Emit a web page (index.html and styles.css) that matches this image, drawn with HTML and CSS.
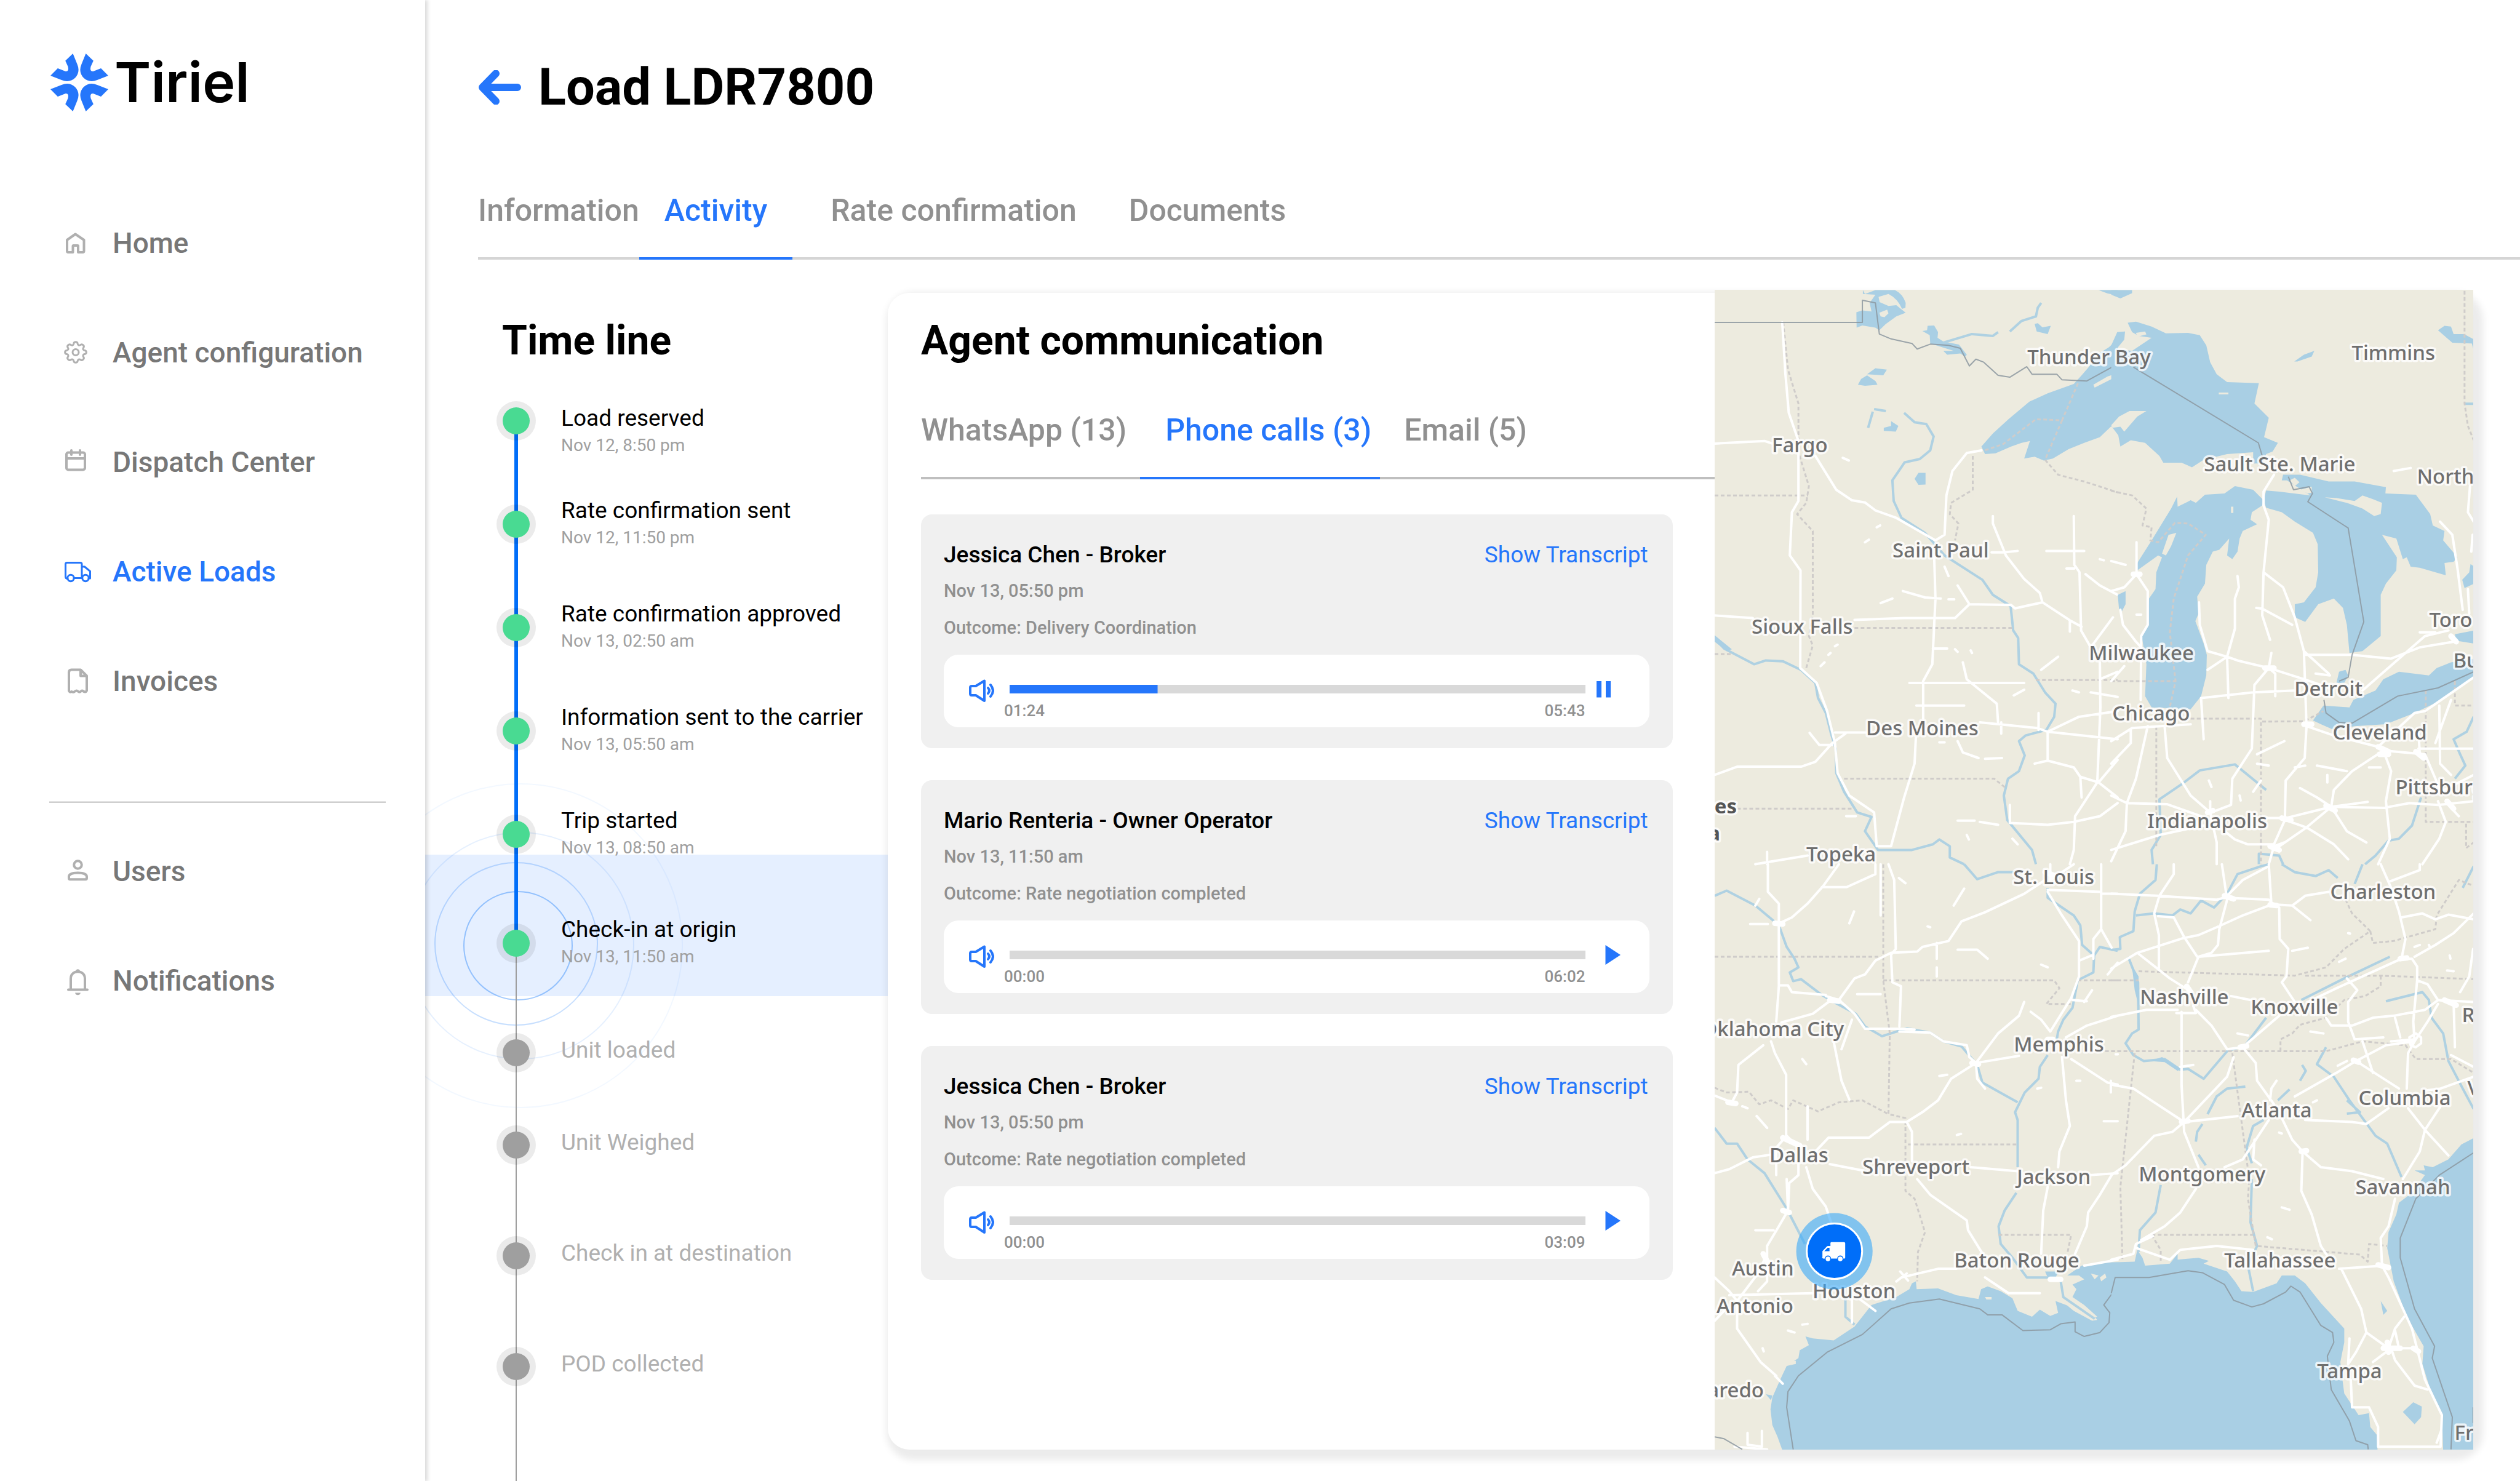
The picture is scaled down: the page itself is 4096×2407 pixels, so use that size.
FILE: index.html
```html
<!DOCTYPE html>
<html lang="en">
<head>
<meta charset="utf-8">
<title>Tiriel - Load LDR7800</title>
<link rel="stylesheet" href="styles.css">
</head>
<body>
<div class="app">
  <aside class="sidebar">
    <a class="brand" href="#">
      <svg class="brand-mark" viewBox="0 0 94 94" aria-hidden="true">
        <defs><path id="petal" d="M36.5 0L24.2 11.7L28.6 21.5Q30.4 29.6 24.6 29L11.9 23.9L0 36L18 43Q23 45 27 45A18.6 18.6 0 0 0 45.6 26.5Q45.6 22 43.4 17Z"/></defs>
        <use href="#petal"/>
        <use href="#petal" transform="matrix(-1 0 0 1 94 0)"/>
        <use href="#petal" transform="matrix(1 0 0 -1 0 94)"/>
        <use href="#petal" transform="matrix(-1 0 0 -1 94 94)"/>
      </svg>
      <span class="brand-name">Tiriel</span>
    </a>
    <nav class="nav" aria-label="Main">
      <a class="nav-link" href="#"><svg class="nav-icon" viewBox="0 0 44 44"><path d="M5 17L18.5 7.500L32.500 17V35Q32.500 37 30.500 37H23V27Q23 26 22 26H15.500Q14.500 26 14.500 27V37H7Q5 37 5 35Z"/></svg>Home</a>
      <a class="nav-link" href="#"><svg class="nav-icon nav-icon--thin" viewBox="0 0 44 44"><circle cx="19" cy="21.500" r="5"/><path d="M15.800 7.500C16.200 3.800 21.800 3.800 22.200 7.500C22.600 10.300 24.800 11 27 9.400C30 7.400 33.800 11.200 31.700 14C30.200 16.300 31.200 18.200 33.600 18.500C37.300 19 37.300 24 33.600 24.600C31 25 30.200 27 31.700 29.200C33.800 32 30 35.800 27 33.700C24.800 32.200 22.600 33 22.200 35.700C21.800 39.200 16.200 39.200 15.800 35.700C15.400 33 13.200 32.200 11 33.700C8 35.800 4.200 32 6.300 29.200C7.800 27 7 25 4.400 24.600C.7 24 .7 19 4.400 18.500C6.800 18.200 7.800 16.300 6.300 14C4.200 11.200 8 7.400 11 9.400C13.200 11 15.400 10.300 15.800 7.500Z"/></svg>Agent configuration</a>
      <a class="nav-link" href="#"><svg class="nav-icon" viewBox="0 0 44 44"><rect x="4" y="6.500" width="30" height="28" rx="3"/><path d="M4 16H34M12 3V10M26 3V10"/></svg>Dispatch Center</a>
      <a class="nav-link nav-link--active" href="#" aria-current="page"><svg class="nav-icon nav-icon--thin" viewBox="0 0 44 44"><path d="M6 33.500Q2.500 33.500 2.500 30V10Q2.500 7.500 5 7.500H26.500Q29 7.500 29 10V32M16 32.500H29M29 14H33.500L42.500 21.500V33H40"/><circle cx="11" cy="32.500" r="5.200"/><circle cx="35" cy="32.500" r="5.200"/></svg>Active Loads</a>
      <a class="nav-link" href="#"><svg class="nav-icon" viewBox="0 0 44 44"><path d="M8 37.500V8Q8 3.500 12 3.500H27L37 13.500V37.500Q35 41 31.500 38.500Q30 36.500 27.500 38.500Q25.500 41 22.500 38.500Q20.500 36.500 18 38.500Q15 41 12.500 39Q9 41 8 37.500ZM27 4V13.500H36"/></svg>Invoices</a>
    </nav>
    <hr class="nav-rule">
    <nav class="nav" aria-label="Account">
      <a class="nav-link" href="#"><svg class="nav-icon" viewBox="0 0 44 44"><circle cx="22.500" cy="11.500" r="6.300"/><path d="M8 33V31C8 26 16 24.500 22.500 24.500S37 26 37 31V33Q37 35.300 35 35.300H10Q8 35.300 8 33Z"/></svg>Users</a>
      <a class="nav-link" href="#"><svg class="nav-icon" viewBox="0 0 44 44"><path d="M11 36V18.500C11 3.500 34 3.500 34 18.500V36M7 36.500H38"/><path class="solid" d="M19 6a3.600 3.600 0 0 1 7 0zM18 41.500h9a4.600 4.600 0 0 1-9 0z"/></svg>Notifications</a>
    </nav>
  </aside>

  <main class="main">
    <header class="page-head">
      <button class="back" type="button" aria-label="Back"><svg viewBox="0 0 70 56"><path d="M29 5.500L7 28L29 50.500M7 28H64"/></svg></button>
      <h1>Load LDR7800</h1>
    </header>
    <nav class="tabs page-tabs" aria-label="Load sections">
      <a class="tab" href="#">Information</a>
      <a class="tab tab--active" href="#" aria-current="page">Activity</a>
      <a class="tab" href="#">Rate confirmation</a>
      <a class="tab" href="#">Documents</a>
    </nav>

    <div class="content">
      <section class="timeline">
        <h2>Time line</h2>
        <ol class="steps">
          <li class="step step--first"><span class="dot"></span><div class="step-text"><p class="step-title">Load reserved</p><p class="step-date">Nov 12, 8:50 pm</p></div></li>
          <li class="step"><span class="dot"></span><div class="step-text"><p class="step-title">Rate confirmation sent</p><p class="step-date">Nov 12, 11:50 pm</p></div></li>
          <li class="step"><span class="dot"></span><div class="step-text"><p class="step-title">Rate confirmation approved</p><p class="step-date">Nov 13, 02:50 am</p></div></li>
          <li class="step"><span class="dot"></span><div class="step-text"><p class="step-title">Information sent to the carrier</p><p class="step-date">Nov 13, 05:50 am</p></div></li>
          <li class="step"><span class="dot"></span><div class="step-text"><p class="step-title">Trip started</p><p class="step-date">Nov 13, 08:50 am</p></div></li>
          <li class="step step--current">
            <svg class="ripples" viewBox="0 0 560 560" aria-hidden="true"><circle cx="283" cy="284" r="88" opacity=".36"/><circle cx="280" cy="281" r="132" opacity=".22"/><circle cx="287" cy="284" r="184" opacity=".1"/><circle cx="287" cy="284" r="263" opacity=".05"/></svg>
            <span class="dot"></span><div class="step-text"><p class="step-title">Check-in at origin</p><p class="step-date">Nov 13, 11:50 am</p></div></li>
          <li class="step step--pending step--next"><span class="dot"></span><div class="step-text"><p class="step-title">Unit loaded</p></div></li>
          <li class="step step--pending step--near"><span class="dot"></span><div class="step-text"><p class="step-title">Unit Weighed</p></div></li>
          <li class="step step--pending"><span class="dot"></span><div class="step-text"><p class="step-title">Check in at destination</p></div></li>
          <li class="step step--pending"><span class="dot"></span><div class="step-text"><p class="step-title">POD collected</p></div></li>
        </ol>
      </section>

      <section class="panel">
        <div class="comms">
          <h2>Agent communication</h2>
          <nav class="tabs comms-tabs" aria-label="Channels">
            <a class="tab" href="#">WhatsApp (13)</a>
            <a class="tab tab--active" href="#" aria-current="page">Phone calls (3)</a>
            <a class="tab" href="#">Email (5)</a>
          </nav>
          <div class="calls">
            <article class="call">
              <header class="call-head"><h3>Jessica Chen - Broker</h3><a href="#">Show Transcript</a></header>
              <p class="call-meta">Nov 13, 05:50 pm</p>
              <p class="call-meta">Outcome: Delivery Coordination</p>
              <div class="player">
                <button class="icon-btn" type="button" aria-label="Volume"><svg class="speaker" viewBox="0 0 42 38"><path d="M12 11L26 2.500V35L12 26H5.500Q3 26 3 23.500V13.500Q3 11 5.500 11ZM32 14Q36 18.500 32 23M36 9Q44 18.500 36 28"/></svg></button>
                <div class="track"><input type="range" aria-label="Position" min="0" max="343" value="84" style="--played: 25.7%"><div class="times"><span>01:24</span><span>05:43</span></div></div>
                <button class="icon-btn" type="button" aria-label="Pause"><svg class="toggle" viewBox="0 0 44 32"><path d="M1 3h8v26.500h-8zM16 3h8v26.500h-8z"/></svg></button>
              </div>
            </article>
            <article class="call">
              <header class="call-head"><h3>Mario Renteria - Owner Operator</h3><a href="#">Show Transcript</a></header>
              <p class="call-meta">Nov 13, 11:50 am</p>
              <p class="call-meta">Outcome: Rate negotiation completed</p>
              <div class="player">
                <button class="icon-btn" type="button" aria-label="Volume"><svg class="speaker" viewBox="0 0 42 38"><path d="M12 11L26 2.500V35L12 26H5.500Q3 26 3 23.500V13.500Q3 11 5.500 11ZM32 14Q36 18.500 32 23M36 9Q44 18.500 36 28"/></svg></button>
                <div class="track"><input type="range" aria-label="Position" min="0" max="362" value="0" style="--played: 0%"><div class="times"><span>00:00</span><span>06:02</span></div></div>
                <button class="icon-btn" type="button" aria-label="Play"><svg class="toggle" viewBox="0 0 44 32"><path d="M15.500 0L40 16L15.500 32Z"/></svg></button>
              </div>
            </article>
            <article class="call">
              <header class="call-head"><h3>Jessica Chen - Broker</h3><a href="#">Show Transcript</a></header>
              <p class="call-meta">Nov 13, 05:50 pm</p>
              <p class="call-meta">Outcome: Rate negotiation completed</p>
              <div class="player">
                <button class="icon-btn" type="button" aria-label="Volume"><svg class="speaker" viewBox="0 0 42 38"><path d="M12 11L26 2.500V35L12 26H5.500Q3 26 3 23.500V13.500Q3 11 5.500 11ZM32 14Q36 18.500 32 23M36 9Q44 18.500 36 28"/></svg></button>
                <div class="track"><input type="range" aria-label="Position" min="0" max="189" value="0" style="--played: 0%"><div class="times"><span>00:00</span><span>03:09</span></div></div>
                <button class="icon-btn" type="button" aria-label="Play"><svg class="toggle" viewBox="0 0 44 32"><path d="M15.500 0L40 16L15.500 32Z"/></svg></button>
              </div>
            </article>
          </div>
        </div>

        <svg class="map" viewBox="0 0 1233 1884" preserveAspectRatio="xMidYMid slice" role="img" aria-label="Truck location map">
          <!-- north-west -->
          <g transform="matrix(.42406 0 0 .60959 -10.2 -22.6)">
            <path class="water" d="M592 38L600 48L640 38H715Q745 48 756 72L755 85L742 88Q725 60 690 48L652 56L656 70L690 80L720 78L756 98L720 108L680 128L655 145L640 138L590 132L568 138L567 97L590 92L625 95L618 72L640 50L592 48ZM820 147L838 145L840 133L865 132L880 150L878 165L900 175L960 183L990 210L985 215L965 207L915 210L900 200L940 200L850 180L848 158ZM1250 128L1262 126L1280 137L1312 133L1300 155L1258 148ZM1495 38L1530 47L1568 52V38ZM573 290L585 275L608 265L640 280L648 290L600 293ZM608 262L640 246L684 250L670 265ZM672 405L700 400V387L728 400L718 415L672 413ZM790 541L805 525L832 525V556L805 557ZM1046 455L1090 420L1150 382L1230 335L1300 313L1400 288L1430 265L1455 245L1500 205L1535 190L1550 180L1570 150V405L1545 400L1500 430L1440 445L1380 462L1320 487L1285 492L1250 482L1210 487L1232 440L1200 445L1160 455L1100 473L1060 475Z"/>
            <path class="land" d="M1475 290L1530 268L1555 262L1545 275L1480 298ZM655 98L685 90L690 100L675 110L660 108Z"/>
            <path class="river" d="M900 178L1010 155L1090 160L1110 150M1155 148L1200 120L1255 108L1262 85L1275 72M750 365L790 390L835 395L863 428L850 465L810 488L752 497L705 545L710 600L740 645L830 685L905 745L960 770L1050 810L1090 850L1158 880L1168 945L1187 965L1190 1035L1245 1060L1290 1110L1330 1140L1325 1175L1295 1210L1215 1225L1190 1240L1212 1278L1190 1320L1148 1340L1132 1385L1145 1450L1240 1530L1255 1568M612 405L630 362M635 355L680 360M24 965L60 993L175 1035L220 1025L285 1027L355 1050L410 1085L420 1125L450 1165L470 1220L488 1260L490 1325L520 1375L570 1430L625 1442L600 1480L650 1530L780 1530L860 1515L885 1502L925 1520V1550L980 1568"/>
            <path class="water" d="M24 958L90 995L70 1000L24 975Z"/>
            <path class="state" d="M287 124L305 250L345 340V470L385 560L375 605L340 635L400 680V905L385 960L400 985L375 1045M24 585H382M560 938H1168M24 1008H95M110 1420H560M520 1340H1095L1140 1365M1255 1077H1568M1013 480V570L930 605L925 635L958 660L945 705M1060 465L1130 448L1255 382L1355 385L1420 280M1355 385L1290 490L1340 530L1440 548L1568 577"/>
            <path class="road" d="M283 124L295 260L308 365L345 440V600L320 630L312 745L353 785L352 1045L415 1085L455 1160L485 1245L495 1325L540 1385L635 1430L645 1520H700L750 1390L790 1300L795 1230M24 447L215 440L245 447M410 480L490 570L550 598L600 604L640 625L720 645L870 705L905 690L912 585L935 520L990 472L1046 465M865 745L870 860L858 1035L823 1080V1180M24 905L170 912M560 917L750 912H945L1000 875L1160 877L1175 886L1280 870L1385 918L1430 935M1090 640V660L1140 745L1210 808L1270 845L1280 870M1085 737H1130L1185 733M1400 640L1402 770L1422 790L1428 945L1465 990M1385 918V948M1372 780H1402M1295 733H1440M1445 795L1500 825L1568 850M1465 990L1550 910M770 1085H1210M797 1145H980M975 1030L990 1075L1105 1140L1110 1190M1122 1190V1220M485 1217H605M1040 1190L1260 1205L1300 1215L1420 1175L1568 1160M1265 1165V1210M1300 1215L1568 1235M1250 1300L1300 1292V1215M1300 1292L1400 1310L1425 1335L1495 1350L1568 1290M1500 1030L1502 1150L1490 1350L1405 1440L1400 1530L1385 1568M1155 1410V1458L1300 1463L1400 1455L1500 1440L1568 1405M1425 1335L1430 1390M1495 1350L1568 1390M1465 1110L1568 1122M1500 1075L1568 1055M24 1330L110 1308H355L410 1295L475 1245L525 1220M388 1218L425 1250H475M225 1535V1568M180 1568L290 1555L380 1545M745 840L830 857L890 860M920 862H942M660 872L705 860M860 993H915M955 825L1000 875M905 775L920 800M1275 1050L1340 1015M1170 1118L1210 1103M600 710L615 703M645 670L658 665M515 485L538 492M430 1040L445 1030M485 987L495 983M460 1010L468 1005M945 995L955 1002M1005 998L1010 1005M955 1240L975 1270L1035 1285M1060 1287L1125 1285M955 1452H1020M1040 1455L1110 1463M528 1440H565M885 1243H905M1165 1500L1185 1515M990 1490L998 1502M1395 1105L1420 1110M1500 755L1515 758"/>
            <path class="country" d="M24 124H590V65L640 72L655 155L700 168L780 180L800 195L850 182L920 185L965 193L1000 240L1025 222L1055 230L1110 265L1155 270L1220 242L1240 262H1335L1355 277L1450 280L1568 235"/>
          </g>
          <!-- north-east -->
          <g transform="matrix(.423 0 0 .60959 646.5 -22.6)">
            <path class="water" d="M-5 38H75V46L30 60L-5 50ZM-5 185L18 150L48 148L45 170L15 195L75 200L150 165L100 160L75 150L58 125L90 122L150 135L205 153L290 152L335 158L360 185L375 230L400 262L440 283L562 286L545 340L600 378L582 430L635 445L615 468L590 475L575 500H540V470L440 475L350 490L305 510L265 498H195L180 480L125 445L70 438L30 455L22 425L-5 400ZM95 785V765L150 705L225 620L248 588L250 615L300 598L320 605L355 583L430 580L470 560L540 570L580 598L575 612L535 630L530 650L555 662L500 680L488 700L480 735L460 755L440 745L448 700L410 730L385 735L360 770L355 820L325 855L330 900L318 920L350 980L362 1010L360 1065L340 1120L300 1155L150 1150L125 1120L130 1035L112 960L130 935L140 860L165 835L168 790L190 750L175 745ZM580 598L590 572L640 575L760 585L670 545H650L655 530H720L830 548H930L1050 563L1048 580L1165 583L1220 635L1230 665L1275 680L1270 705L1325 750L1310 762L1275 765L1280 798L1180 778L1145 775L1130 750L1115 755L1090 700L1035 690L1092 750L1090 785L1050 820L1030 850V960L960 1000L910 1005L900 930L885 885L850 860L790 875L740 922L700 910V875L735 870L780 830L790 790L788 715L770 685L700 655L650 630L590 618ZM860 1085L870 1055L895 1050L905 1065L890 1085ZM770 1185L810 1145L910 1150L925 1130L1010 1105L1040 1075L1100 1055L1215 1065L1245 1045L1300 1030L1390 1020V1068L1250 1135L1160 1165L1050 1195L930 1200L850 1210L800 1195ZM1315 955L1390 945V980L1320 972ZM1343 810L1370 790L1375 768L1390 775V820L1352 832ZM1250 145L1275 133L1300 135L1310 155H1350L1390 170V205L1380 180L1305 178ZM698 228L735 210L775 200L765 215L710 228ZM20 850L50 840V875L35 895L25 890Z"/>
            <path class="land" d="M-5 398L25 375L65 360L130 360L95 375L45 415L30 402L0 405ZM190 740L215 690L245 685L225 720L205 745ZM860 592L930 600L960 585L1000 595L1035 605L1030 635L1005 640L960 620L900 605L815 590ZM680 545L700 538L718 550L700 560ZM90 152L125 148L130 156L95 162ZM408 311H445V316H408ZM455 615H464V632H455ZM720 570L765 562V578L750 580Z"/>
            <path class="river" d="M155 1568L150 1530L185 1490L180 1395L265 1355L335 1318L470 1302L590 1370M1387 1175L1360 1215L1310 1235L1335 1275L1355 1305L1315 1340M1185 1390L1150 1465L1100 1500L1060 1505L1010 1545L970 1568M1352 341H1387M562 1568V1540L640 1545L655 1568"/>
            <path class="state" d="M1352 40V340L1365 400L1387 438M-5 573L75 585L130 620L115 665L150 670L145 705L175 710L240 658L290 660L358 690L290 745L235 860L220 950L242 1080L215 1165M-5 1080H242M168 1200V1520M300 1180H570V1568M575 1188L735 1187L810 1160M1203 1105V1455H1387M1315 1080V1145H1387M1358 1460V1525L1387 1510"/>
            <path class="road" d="M620 530L580 575V612L600 650L580 790L655 830L700 910L735 1000L745 1200L738 1285L665 1345L662 1450M580 790L575 905L605 970M552 885L575 887L690 930M480 800L485 830L470 860V940L440 1015L445 1125M332 870L335 930L365 1000L440 1015L480 1025L600 1045L735 1075L800 1090M365 1050L440 1015M340 1125L540 1110L700 1105M610 1005L600 1045L545 1090L535 1260L460 1340L455 1410L380 1430M600 1045L625 1060V1120M735 1010H920L1070 1020L1180 990L1310 975M960 1105L1100 1020L1200 960L1290 945M1180 950L1240 950M340 1125L350 1235M745 1200L850 1225M735 1000L830 1060M-5 760L50 770M-5 840L45 830L92 795L135 840V930L110 960L108 1130M92 710V795M30 890L40 930L90 975L110 990M92 903H110M-5 1080L45 1040M-5 1240L75 1205L300 1195M70 1210V1245L-5 1300M200 1200L210 1285L300 1385L375 1430M135 1200L90 1340L55 1405L50 1480L-5 1560M-5 1385L55 1405L210 1408L340 1440M-5 1530L180 1490L350 1465M375 1400V1430L400 1510V1568M430 1480L470 1502L520 1515H620L665 1445L840 1415M590 1445H665M720 1365L785 1390L840 1415L980 1402M840 1415L1040 1418L1140 1405L1250 1410L1387 1400M840 1415L850 1370L920 1320L1040 1265L1200 1275L1240 1340L1260 1375L1387 1330M1040 1265L1070 1320L1050 1400L1065 1500L1020 1568M850 1225L1020 1255L1160 1165L1200 1160L1387 1070M1175 1260H1387M1255 1145L1258 1300L1300 1330M1250 1400L1280 1455L1255 1500L1190 1568M1330 1440L1290 1410M840 1415L900 1480L975 1510M662 1450L745 1470L850 1515L905 1555M620 1530L745 1470L840 1415M1258 655L1305 690L1325 780L1345 890M1365 835L1370 900M1373 560L1365 630L1387 655M1383 690L1378 735M1080 520L1145 512M785 1305L900 1320M1175 1210L1180 1275M1240 1245L1300 1130M600 1568L620 1520L660 1510M555 1275L660 1240M700 1310L740 1305M555 1300L600 1305M370 1345L380 1362M488 1385L492 1398M825 1330V1350M985 1310H1030M780 1060L835 1065M540 1375L570 1345"/>
            <path class="road hub" d="M1020 1255L1060 1268M1025 1275H1060M1165 1268L1195 1285M820 1412L855 1425M605 1520L640 1530M735 1195H765M1285 1400L1310 1420M80 795H105M1300 960L1320 975M365 1430L385 1425M585 1045H620M650 1445L685 1450"/>
            <path class="country" d="M80 243L560 445L575 480M675 535L695 570L755 562L768 580L750 602L905 672L965 922L920 1010L905 1070L870 1080M812 1130L820 1165L870 1190L920 1192L1095 1120L1250 1098L1387 1055"/>
          </g>
          <!-- south-west -->
          <g transform="matrix(.42406 0 0 .63928 -10.2 933.3)">
            <path class="water" d="M780 1065L795 1060L798 1080L880 1078L950 1095L1035 1105L1045 1080L1070 1073L1120 1085L1165 1103L1185 1135L1240 1150L1270 1132L1310 1148L1340 1140L1330 1110L1390 1125L1470 1155L1490 1150L1440 1120L1395 1100L1410 1080L1395 1068L1440 1055L1420 1045H1375L1430 1020L1500 1012H1572V1492H285L265 1455L245 1425L238 1385L245 1355L275 1310L300 1275L345 1255L350 1235L385 1222L372 1200L400 1205L480 1210L560 1175L625 1120L720 1100L770 1080ZM1290 1035H1340L1330 1052L1300 1050ZM220 1347L245 1350L240 1362Z"/>
            <path class="land" d="M1500 1050L1520 1040L1525 1050L1505 1060ZM1345 1105L1480 1150L1490 1158L1470 1160L1400 1135ZM1465 1040L1495 1045L1480 1055ZM1060 1100L1085 1100V1106H1065ZM296 1262L335 1262L335 1270L300 1275Z"/>
            <path class="river" d="M24 80L70 67L180 105L270 155L300 210L330 240L345 262L312 275L325 297L355 292L430 330L480 350L565 380L600 412L665 437L760 417L850 428L900 450L970 463L1030 510L1050 555L1185 605M1300 60V85L1400 130L1425 155L1432 205L1478 232L1475 275L1415 295L1395 365L1360 395L1340 425L1335 445M1300 485L1270 515L1265 545L1212 580L1175 630L1185 650L1185 770M1180 835L1135 880L1112 920L1120 965L1165 1000L1220 1050H1320M1478 232L1500 210L1568 220M980 0L1030 38L1110 20H1200M24 670L70 710H110L150 750L215 785L300 875L370 965M525 1100V1150L560 1170M1350 1060L1360 1100L1480 1155"/>
            <path class="state" d="M24 235H665M670 0V295L695 430L690 635L755 645V830L790 850L830 935L803 985L800 1060M670 295H1325L1345 315L1295 355H1395M24 568L70 580L155 578L195 610L240 600L305 622L325 600L420 628L500 605L590 600L690 635M765 712H1185M1112 942H1390L1375 990M1415 295H1568M1520 475H1568"/>
            <path class="road" d="M228 0V70L270 100V310L260 400M272 150L320 135L380 100L440 55L500 0M435 58L530 58L640 25V0M270 308H305L320 325L450 332M160 152H228M180 105L195 88M450 335L500 345L560 290L600 280L640 245L700 225L800 222L820 210L920 195L970 145L1060 122L1210 75L1290 40M690 0L712 40L718 215L700 230L705 300L738 310L732 412M500 345L560 380L600 418H732L790 420M732 425L850 428L900 450L990 460L1000 490L1025 505L1030 545L1060 570M280 402L400 380L470 345M660 0V130M240 450L255 480L298 535V690M210 460L115 510L110 580L90 605L24 588M480 450L510 550L540 598M875 200V240M875 262V285M1025 505L1190 487M1025 505L1110 430L1190 385L1210 350M1025 505L930 545L880 600L820 630L760 655H695L615 695L460 695L410 730M760 655L780 680V755M800 800L850 840L990 905L995 930L1060 1000M1005 770L1185 780M465 762L590 778M24 785L80 775L170 745L240 738M300 690L260 720V790M300 690L345 720V790L310 810L305 880L270 920L225 970V1000M300 800L305 880M375 770L400 825L450 870L470 910M380 615V700M180 930H250M24 1050L80 1085L110 1110L190 1040L225 990M225 1020L225 1060L190 1085M80 1095L400 1090M24 1160L60 1135M110 1110V1180L200 1265L260 1300M740 1050L880 1028H950M735 1035L765 1058M720 1060L760 1040M550 1100V1165M580 1105L640 1135M1060 1050L1150 1090M1150 1090H1270M1355 490L1370 600L1385 665L1345 730L1340 770M1300 820L1283 880L1275 990M1460 790L1568 785M1545 790L1500 840L1455 885L1450 920L1405 990M1440 1020L1568 1005M1300 70L1350 125L1420 195V285L1390 340L1310 425M1300 65L1505 70V165L1475 190V240M1505 0V70M1505 75H1568M1505 165L1545 212M1310 0V40L1400 0M1390 495L1460 525L1530 555L1568 560M1542 550V580M1370 440L1450 410L1568 385M1235 375L1275 395L1310 425M1420 245L1475 230M1440 350L1470 320M1515 653H1568M1395 345L1450 348M1530 280L1568 250M955 217H1030L1070 240M570 330H660M510 470L550 395M540 150L558 120M940 105L980 62M730 35L755 48M185 640L225 670M360 495L375 508M885 538L915 535M1275 255L1300 262M840 158L850 160M1410 550L1425 550M1260 570L1275 568M305 1185L330 1190M360 1170L380 1168M208 1230L212 1238M150 1445V1475L205 1480V1440M100 1480L225 1487M130 615L150 620M255 1300L285 1320M952 688L968 685"/>
            <path class="road hub" d="M465 345L500 348M1010 505L1035 508M285 695L350 715M255 150L285 152M210 990L230 1015M285 880L310 885M1300 445H1320M1310 1055L1350 1055M75 605L105 608M1290 20L1330 30"/>
            <path class="country" d="M325 1487L300 1380L305 1340L345 1300L455 1240L590 1195L700 1130L770 1115L885 1105L1040 1130L1070 1145H1125L1205 1185L1310 1183L1350 1168L1405 1163V1188L1440 1200L1500 1190L1535 1165L1538 1140L1515 1120L1548 1090L1555 1052H1568M24 1455L60 1460L130 1487"/>
          </g>
          <!-- south-east -->
          <g transform="matrix(.423 0 0 .63928 646.5 933.3)">
            <path class="water" d="M-5 1012L85 1010L95 980L115 1000L125 1020L220 1015L250 990V1005L330 1000L370 1008L350 1015L440 1035L470 1060L495 1085L540 1087L630 1065L650 1045H700L740 1065L800 1115L890 1180V1215L875 1265L885 1320L890 1345L945 1400L985 1395L990 1430L1015 1450L1018 1492H-5ZM1390 695L1340 712L1290 750L1230 770L1195 765L1200 778H1160L1200 790L1150 835L1100 860L1090 890L1060 935L1055 975L1080 1060L1130 1150L1195 1225L1190 1270L1225 1345L1265 1395L1270 1492H1390ZM1115 1392L1155 1367L1188 1378L1185 1405L1160 1423ZM1030 1110L1055 1135L1040 1145Z"/>
            <path class="river" d="M170 0L165 40L105 75L85 120L80 170L28 185L30 215L-5 218M60 235L98 300L100 420L75 430L50 455L80 485L120 500L200 495L260 522L290 520L350 545L440 475L510 460L590 390M725 345L890 290L1065 235M90 130L160 125L230 130L260 115L300 125L340 92L390 110L440 75L480 25L570 5L600 0M650 0L700 20L780 30L830 15L865 35M930 50L960 0M1345 60L1387 5M365 635L400 590L440 570L510 565M320 705L325 680L345 660M330 738L358 765M185 815L165 885L105 930L100 985M580 650L540 665L515 720L535 760M535 800L530 910L555 970L520 1020L540 1085M820 465L785 508L850 540L910 600L1010 690L1055 710L1110 795M900 600L950 630L900 634M1050 348L1190 325L1215 345L1225 390L1270 430L1290 500L1345 570L1387 622M635 600L680 572M720 550L742 525L728 510"/>
            <path class="water" d="M55 235L100 285V360L85 320L75 260ZM145 500L190 490L262 520L250 525L200 503Z"/>
            <path class="state" d="M100 272L700 283L820 262L890 215L990 170L920 125L895 90M740 283H1030L1387 292M-5 295H100M-5 475H820L960 450L1125 460L1165 495H1300L1387 530M85 480L30 820L38 1005M460 480L525 800L520 850L550 970L950 992L980 1010L985 965L1055 970M150 942H540M150 942L185 980V1010M645 475V445L690 430L720 408L820 390L890 345L970 335L1030 310V285M990 170L1000 200L1080 195L1240 165L1245 130L1330 40L1387 55"/>
            <path class="road" d="M235 0V25L180 80L160 125L178 180V265M-5 75L170 80L400 90L430 85L600 90L620 102L690 105L740 80L830 70M420 0L440 90L410 165L405 205L380 225L330 235L290 300M175 132L235 135L275 185L325 235M-5 265L95 225L270 188L330 180L400 160L500 130L600 105M95 225L220 290L280 315M600 0L610 100L640 110L642 190L675 215L668 285L650 300L700 350M440 80L500 40L600 5M690 105L760 142M330 235L600 220M690 220L750 212M-5 388L130 370H250M320 370L380 410L440 470L500 465L550 505L555 550L620 610M500 465L640 385M750 350L860 315L1110 240H1150L1170 260V295L1155 400L1160 450L1135 480L1130 570M265 375V560L275 680L330 770M245 378H320L310 360M-5 560L80 570L160 605L275 655L480 640M-5 790L50 765L160 690L230 680L275 655L440 540L465 490M430 770L500 750L600 650M110 955L200 920L260 885L320 825M-5 1005L80 990L90 965L155 945M90 975L220 1005L260 980L400 970L540 980M650 645L690 700L730 730L800 770L920 780L1040 800M730 730L725 830L765 890L800 970L830 1000M740 650L920 655L975 660L1060 620M700 590L860 530L935 500L1050 460L1160 450M935 500L1100 570M960 450L1000 530M865 512L900 500M1135 620L1200 675L1290 740M1260 615L1200 675L1180 730L1115 800M1085 850L1060 920L1030 950L1035 1020L1060 1050L1150 1180L1200 1310L1265 1400L1260 1480H1020V1430L985 1380H920L915 1310M870 1028L1040 1020M880 1030L955 1130L975 1190L935 1240L905 1270L910 1205M975 1190L1060 1230H1160M1000 1265L1070 1230L1085 1260L1160 1325L1210 1335M1060 1230L1085 1180L1120 1150M1085 1185L1100 1230M900 290L940 320L905 350V400L930 445L1040 440M820 390L840 410H920L1000 390L1080 385L1200 370L1250 345L1387 350M1085 390L1105 440M1070 450L1160 445M1170 295L1210 305L1250 345L1310 350L1315 465M1160 450L1210 400L1250 355M1110 240L1125 190L1100 120L1070 60L1030 0M1060 45L1180 15V0M1110 135L1190 125L1240 140L1290 128L1387 140M1160 235L1240 205L1310 175L1387 125M455 335L530 345M1300 485L1387 515M1200 575L1260 570L1387 540M1335 325L1370 285L1385 215M605 600L610 570L630 550M480 430L520 435M760 425L810 430M650 872L680 878M595 948L612 953M260 515L310 510M545 700L540 750L570 765M870 248L895 240M1160 210L1180 205M1215 205L1220 212M1295 232L1298 240M1285 270L1310 272M905 175L912 176M640 682L650 684M770 605L785 600M12 483H20M1245 1470L1262 1440"/>
            <path class="road hub" d="M490 465L515 462M265 655L290 652M430 80L465 88M1275 345L1320 358M925 498L945 503M1020 1018L1060 1025M1040 1230H1105M1055 1215L1060 1240M725 730L745 728M605 103L630 105M285 310L300 325M1105 240L1130 238M1155 1230L1175 1238"/>
            <path class="road" d="M1140 440L1165 430L1185 440V455L1165 465L1145 460Z"/>
            <path class="country" d="M-5 1090L10 1050H140L290 1033L345 1038L430 1068L465 1108L535 1125L580 1117L665 1087L685 1072L720 1087L800 1172L845 1190L850 1215L825 1250L840 1335L910 1415L935 1465L980 1475L982 1487M1387 733L1255 790L1165 850L1105 950V1000L1160 1130L1237 1225L1228 1255L1305 1405L1300 1487M1385 1380V1420"/>
          </g>
          <g class="cities">
            <text x="93" y="264">Fargo</text>
            <text x="508" y="121">Thunder Bay</text>
            <text x="289" y="435">Saint Paul</text>
            <text x="60" y="559">Sioux Falls</text>
            <text x="608" y="602">Milwaukee</text>
            <text x="246" y="724">Des Moines</text>
            <text x="646" y="700">Chicago</text>
            <text class="region" x="36" y="851" text-anchor="end">es</text>
            <text class="region" x="9" y="895" text-anchor="end">a</text>
            <text x="149" y="929">Topeka</text>
            <text x="1035" y="114">Timmins</text>
            <text x="795" y="295">Sault Ste. Marie</text>
            <text x="1141" y="315">North</text>
            <text x="1161" y="548">Toro</text>
            <text x="1200" y="614">Bu</text>
            <text x="942" y="660">Detroit</text>
            <text x="1004" y="731">Cleveland</text>
            <text x="1106" y="820">Pittsburg</text>
            <text x="703" y="875">Indianapolis</text>
            <text x="485" y="966">St. Louis</text>
            <text x="210" y="1213" text-anchor="end">Oklahoma City</text>
            <text x="486" y="1238">Memphis</text>
            <text x="89" y="1417">Dallas</text>
            <text x="240" y="1436">Shreveport</text>
            <text x="491" y="1452">Jackson</text>
            <text x="28" y="1601">Austin</text>
            <text x="3" y="1662">Antonio</text>
            <text x="159" y="1638">Houston</text>
            <text x="389" y="1588">Baton Rouge</text>
            <text x="80" y="1799" text-anchor="end">aredo</text>
            <text x="1000" y="990">Charleston</text>
            <text x="691" y="1161">Nashville</text>
            <text x="871" y="1177">Knoxville</text>
            <text x="1214" y="1190">R</text>
            <text x="1223" y="1309">V</text>
            <text x="1046" y="1325">Columbia</text>
            <text x="856" y="1345">Atlanta</text>
            <text x="689" y="1448">Montgomery</text>
            <text x="1041" y="1469">Savannah</text>
            <text x="828" y="1588">Tallahassee</text>
            <text x="979" y="1768">Tampa</text>
            <text x="1202" y="1868">Fr</text>
          </g>
          <g transform="translate(194.600 1562)">
            <circle class="pin-halo" r="62"/>
            <circle class="pin" r="45"/>
            <path class="pin-truck" d="M-6.500 -13Q-6.500 -14.800 -5 -14.800H15.500Q17.500 -14.800 17.500 -13V10.500Q17.500 12 16 12H14.500A5 5 0 0 0 4.500 12H-5.500A5 5 0 0 0 -15.500 12H-18.500L-20.500 10H-19.500V0L-12.500 -7.500Q-12 -8.500 -10 -8.500H-6.500ZM-16.500 0H-8V-5.500H-11Z" fill-rule="evenodd"/>
            <circle class="pin-wheel" cx="-10.500" cy="12.500" r="3.800"/><circle class="pin-wheel" cx="9.500" cy="12.500" r="3.800"/>
          </g>
        </svg>
      </section>
    </div>
  </main>
</div>
</body>
</html>
```

FILE: styles.css
```css
:root {
  --blue: #2576fb;
  --blue-strong: #006ef9;
  --muted: #909090;
  --soft: #a0a0a0;
}

* { box-sizing: border-box; }

body, h1, h2, h3, p, ol { margin: 0; padding: 0; }

body {
  background: #fff;
  color: #000;
  font-family: Roboto, "Liberation Sans", sans-serif;
}

a { color: inherit; text-decoration: none; }

button { padding: 0; border: 0; background: none; cursor: pointer; }

svg { display: block; }

.app {
  display: grid;
  grid-template-columns: 691px minmax(0, 1fr);
  min-height: 100vh;
}

/* Sidebar */
.sidebar {
  position: relative;
  z-index: 2;
  padding: 87px 64px 0 80px;
  background: #fff;
  box-shadow: 4px 0 6px rgba(0, 0, 0, .14);
}

.brand {
  display: flex;
  align-items: center;
  gap: 10px;
  height: 94px;
  padding-left: 2px;
}

.brand-mark { width: 94px; height: 94px; fill: var(--blue); }

.brand-name {
  font-family: Inter, sans-serif;
  font-weight: 600;
  font-size: 90px;
  line-height: 94px;
}

.nav {
  display: flex;
  flex-direction: column;
  gap: 124px;
  padding-left: 24px;
}

.brand + .nav { margin-top: 187px; }

.nav-link {
  display: flex;
  align-items: center;
  gap: 35px;
  color: #777;
  font-weight: 500;
  font-size: 46px;
  line-height: 54px;
}

.nav-icon {
  width: 44px;
  height: 44px;
  overflow: visible;
  fill: none;
  stroke: #b0b0b0;
  stroke-width: 4;
  stroke-linecap: round;
  stroke-linejoin: round;
}

.nav-icon--thin { stroke-width: 3; }
.nav-icon .solid { fill: #b0b0b0; stroke: none; }

.nav-link--active { color: var(--blue); }
.nav-link--active .nav-icon { stroke: var(--blue); }

.nav-rule {
  height: 1px;
  margin: 169px 0 85px;
  border: 0;
  background: #333;
}

/* Page head */
.main {
  display: flex;
  flex-direction: column;
  min-width: 0;
  padding-top: 93px;
}

.page-head {
  display: flex;
  align-items: center;
  gap: 28px;
  padding-left: 86px;
}

.back svg {
  width: 70px;
  height: 56px;
  fill: none;
  stroke: var(--blue);
  stroke-width: 12;
  stroke-linecap: round;
  stroke-linejoin: round;
}

h1 { font-weight: 700; font-size: 83px; line-height: 98px; }

h2 { font-weight: 700; font-size: 66px; line-height: 76px; }

.tabs {
  display: flex;
  border-bottom: 4px solid #d5d5d5;
}

.tab {
  margin-bottom: -4px;
  padding-bottom: 47px;
  border-bottom: 4px solid transparent;
  color: var(--muted);
  font-weight: 500;
  font-size: 50px;
  line-height: 58px;
  white-space: nowrap;
}

.tab--active { border-color: var(--blue); color: var(--blue); }

.page-tabs { margin: 122px 0 0 86px; }
.page-tabs .tab--active { margin-right: 62px; padding-inline: 41px; }
.page-tabs .tab:last-child { margin-left: 85px; }

/* Content */
.content {
  display: grid;
  grid-template-columns: 752px minmax(0, 1fr);
  flex: 1;
  padding-right: 76px;
}

.timeline {
  display: flex;
  flex-direction: column;
  padding-top: 94px;
}

.timeline h2 { padding-left: 125px; }

.steps {
  position: relative;
  isolation: isolate;
  flex: 1;
  margin-top: 60px;
  list-style: none;
}

.steps::before,
.steps::after {
  content: "";
  position: absolute;
  z-index: 1;
  left: 147px;
  top: 32px;
}

.steps::before { bottom: 0; width: 2px; background: #9e9e9e; }
.steps::after { left: 145px; width: 6px; height: 849px; background: var(--blue-strong); }

.step {
  position: relative;
  display: flex;
  align-items: center;
  gap: 41px;
  height: 64px;
  padding-left: 116px;
}

.step + .step { margin-top: 104px; }

.dot {
  position: relative;
  z-index: 2;
  flex: none;
  width: 64px;
  height: 64px;
  border: 10px solid rgba(0, 0, 0, .08);
  border-radius: 50%;
  background: #49da92;
  background-clip: padding-box;
}

.step-text { position: relative; z-index: 2; }

.step-title { font-size: 37px; line-height: 44px; white-space: nowrap; }
.step-date { color: var(--soft); font-size: 28px; line-height: 44px; }

.step--first .step-text { padding-top: 36px; }

.step + .step--current {
  height: 230px;
  margin-top: 1px;
  padding-top: 112px;
  padding-bottom: 54px;
  background: #e5efff;
}

.ripples {
  position: absolute;
  left: -132px;
  top: -136px;
  width: 560px;
  height: 560px;
  fill: none;
  stroke: var(--blue-strong);
  stroke-width: 2;
}

.step--pending .dot { background-color: #9f9f9f; }
.step--pending .step-text { padding-bottom: 8px; color: #b0b0b0; }
.step + .step--pending { margin-top: 116px; }
.step + .step--next { margin-top: 60px; }
.step + .step--near { margin-top: 86px; }

/* Communication panel */
.panel {
  position: relative;
  z-index: 1;
  display: grid;
  grid-template-columns: minmax(0, 1343fr) minmax(0, 1233fr);
  margin: 54px 0 52px;
  border-radius: 35px;
  background: #fff;
  box-shadow: 7px 8px 12px 9px rgba(0, 0, 0, .08);
}

.comms { padding: 40px 0 0 54px; }

.comms-tabs { margin-top: 78px; border-color: #bfbfbf; }
.comms-tabs .tab--active { margin: 0 39px -4px 22px; padding-inline: 41px 14px; }

.calls {
  display: flex;
  flex-direction: column;
  gap: 52px;
  margin: 57px 68px 0 0;
}

.call {
  padding: 44px 38px 34px 37px;
  border-radius: 18px;
  background: #f0f0f0;
}

.call-head {
  display: flex;
  justify-content: space-between;
  margin-bottom: 6px;
  padding-right: 2px;
  font-size: 37px;
  line-height: 44px;
}

.call-head h3 { font-weight: 500; font-size: 37px; }
.call-head a { color: var(--blue); }

.call-meta { color: var(--muted); font-weight: 500; font-size: 29px; line-height: 60px; }

.player {
  display: grid;
  grid-template-columns: 42px minmax(0, 1fr) 44px;
  align-items: start;
  margin-top: 14px;
  padding: 40px 43px 12px 40px;
  border-radius: 24px;
  background: #fff;
}

.speaker {
  width: 42px;
  height: 38px;
  fill: none;
  stroke: var(--blue);
  stroke-width: 4;
  stroke-linecap: round;
  stroke-linejoin: round;
}

.toggle { width: 44px; height: 32px; fill: var(--blue); }

.track { margin: 9px 17px 0 16px; padding-left: 9px; }

.track input {
  display: block;
  width: 100%;
  height: 14px;
  margin: 0;
  appearance: none;
  background: linear-gradient(var(--blue), var(--blue)) no-repeat 0 0 / var(--played) 100% #d9d9d9;
}

.track input::-webkit-slider-thumb { appearance: none; width: 1px; height: 14px; opacity: 0; }

.times {
  display: flex;
  justify-content: space-between;
  margin: 13px 0 0 -9px;
  color: var(--muted);
  font-weight: 500;
  font-size: 26px;
  line-height: 30px;
}

/* Map */
.map {
  width: 100%;
  height: calc(100% + 5px);
  margin-top: -5px;
  background: #edebdf;
}

.map path { vector-effect: non-scaling-stroke; }

.water { fill: #a9cfe4; }
.land { fill: #edebdf; }
.river, .road, .state, .country { fill: none; stroke-linejoin: round; }
.river { stroke: #afd1e2; stroke-width: 4; }
.road { stroke: #fff; stroke-width: 4; stroke-linecap: round; }
.road.hub { stroke-width: 9; }
.state { stroke: #cfccca; stroke-width: 3; stroke-dasharray: 6 4; }
.country { stroke: #8c98a0; stroke-width: 2; stroke-opacity: .85; }

.cities text {
  fill: #6f6f6f;
  stroke: rgba(255, 255, 255, .8);
  stroke-width: 7px;
  stroke-linejoin: round;
  paint-order: stroke;
  font-family: "Noto Sans", "Open Sans", sans-serif;
  font-weight: 500;
  font-size: 33px;
}

.cities .region { fill: #555; font-weight: 700; }

.pin-halo { fill: rgba(57, 168, 248, .6); }
.pin { fill: var(--blue-strong); stroke: #fff; stroke-width: 3; }
.pin-truck, .pin-wheel { fill: #fff; }
```
